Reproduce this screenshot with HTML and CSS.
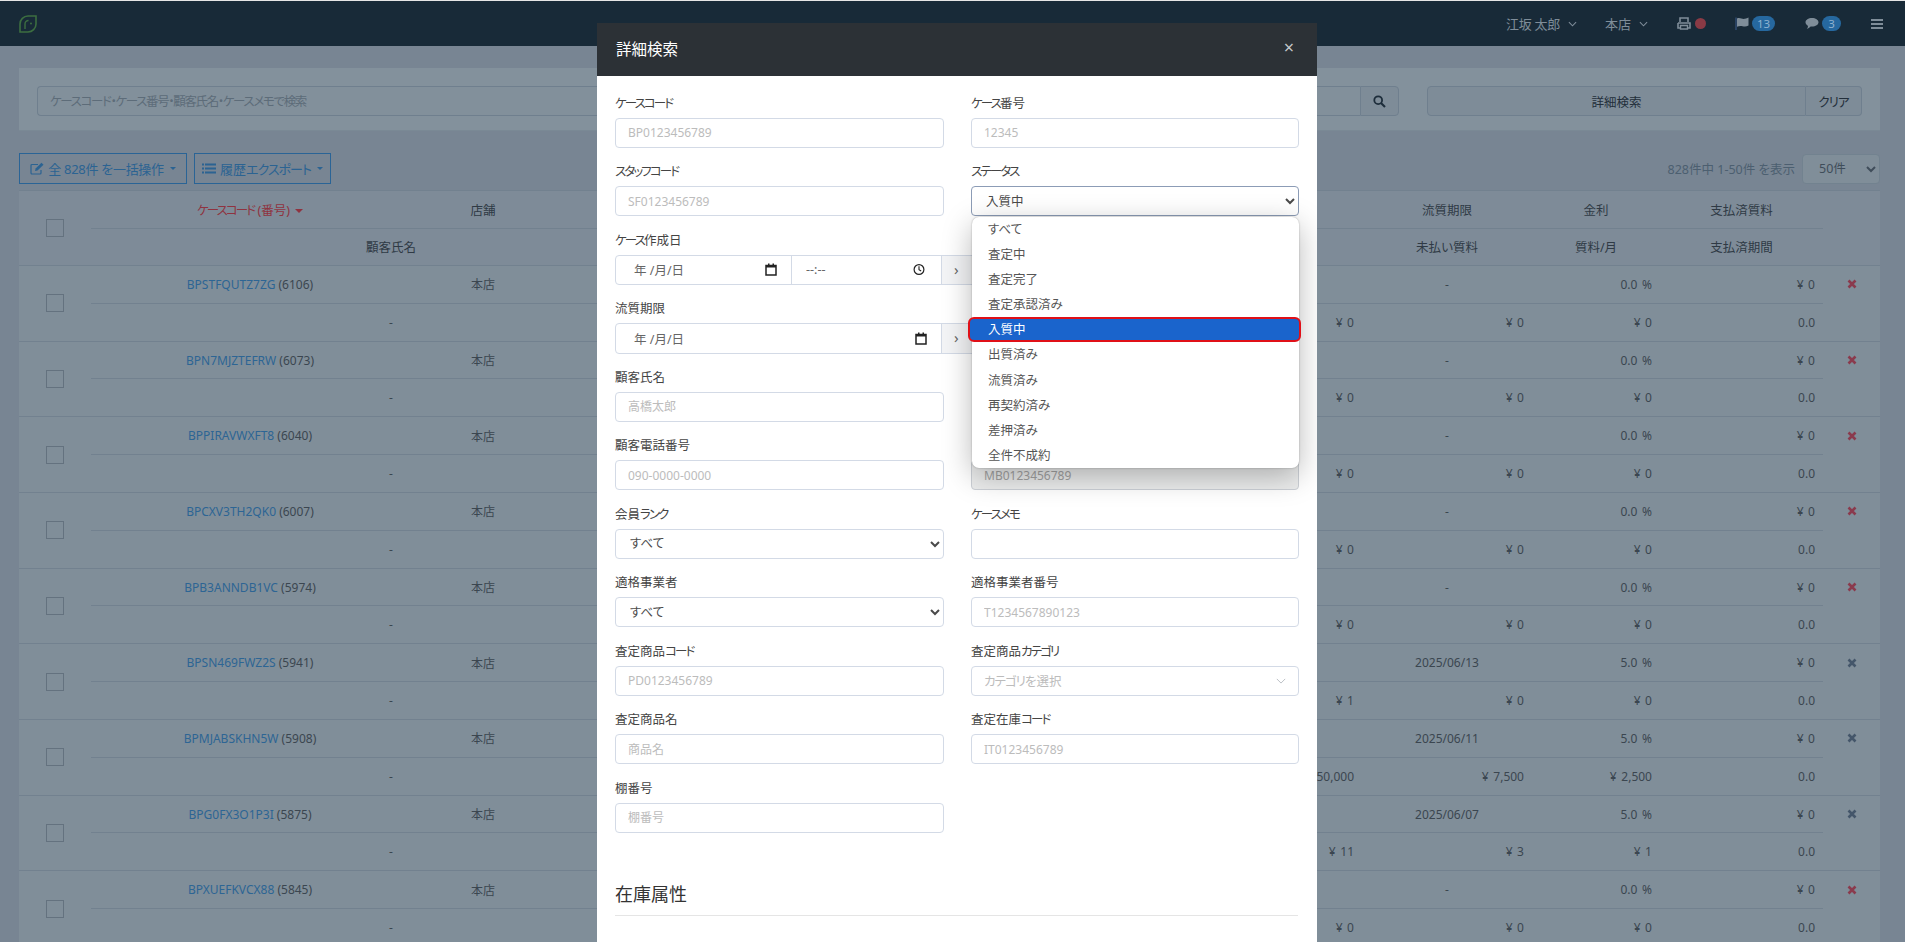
FILE: index.html
```html
<!DOCTYPE html>
<html lang="ja">
<head>
<meta charset="utf-8">
<title>ケース一覧</title>
<link rel="stylesheet" href="styles.css">
</head>
<body>
<header class="topbar">
  <svg class="logo" viewBox="0 0 18 18"><path d="M17 1H9a8 8 0 0 0-8 8v8h8a8 8 0 0 0 8-8z" fill="none" stroke="#3c6e40" stroke-width="1.6"/><path d="M6 14V9a3.500 3.500 0 0 1 3.500-3.500" fill="none" stroke="#3c6e40" stroke-width="1.4"/><circle cx="12" cy="8.500" r="1" fill="#3c6e40"/></svg>
  <nav class="nav">
    <span class="nav-item user">江坂 太郎<svg class="chev" viewBox="0 0 10 6"><path d="M1 1l4 4 4-4" fill="none" stroke="currentColor" stroke-width="1.2"/></svg></span>
    <span class="nav-item shop">本店<svg class="chev" viewBox="0 0 10 6"><path d="M1 1l4 4 4-4" fill="none" stroke="currentColor" stroke-width="1.2"/></svg></span>
    <span class="nav-item print"><svg class="ico" viewBox="0 0 14 13"><path d="M3 5V1h8v4M1 6h12v5h-2M3 11H1V6" fill="none" stroke="currentColor" stroke-width="1.6"/><path d="M3.500 8.500h7v3.500h-7z" fill="none" stroke="currentColor" stroke-width="1.4"/></svg><i class="dot"></i></span>
    <span class="nav-item flag"><svg class="ico" viewBox="0 0 14 13"><path d="M1 0.500V13" stroke="#33517a" stroke-width="1.3"/><path d="M2 1.500c3-1.300 5 1 8 .3 1.300-.3 2.500-.8 3.500-1.300v8c-3 2-6 .5-8 .5-1.300 0-2.500.3-3.500.8z" fill="currentColor"/></svg><b class="badge b13">13</b></span>
    <span class="nav-item msg"><svg class="ico" viewBox="0 0 14 13"><path d="M7 1c3.600 0 6.500 1.900 6.500 4.300S10.600 9.600 7 9.600c-.5 0-1 0-1.400-.1C4.600 10.600 3.200 11.600 1.800 12c.7-.9 1.200-2 1.200-3.100C1.500 8 .5 6.700.5 5.300.5 2.900 3.400 1 7 1z" fill="currentColor"/></svg><b class="badge b3">3</b></span>
    <svg class="burger" viewBox="0 0 12 10"><path d="M0 0h12v2H0zM0 4h12v2H0zM0 8h12v2H0z" fill="currentColor"/></svg>
  </nav>
</header>

<main class="page">
  <section class="search">
    <div class="search-box">
      <input class="search-input" placeholder="ケースコード・ケース番号・顧客氏名・ケースメモで検索">
      <button class="search-btn"><svg viewBox="0 0 13 13"><circle cx="5.200" cy="5.200" r="3.900" fill="none" stroke="currentColor" stroke-width="1.800"/><path d="M8 8l4 4" stroke="currentColor" stroke-width="2.200"/></svg></button>
    </div>
    <div class="adv">
      <button class="adv-main">詳細検索</button>
      <button class="adv-clear"><span class="k1">クリア</span></button>
    </div>
  </section>

  <section class="tools">
    <button class="tool one"><svg viewBox="0 0 14 13"><path d="M11 8v3a1 1 0 0 1-1 1H2a1 1 0 0 1-1-1V3.500a1 1 0 0 1 1-1h6" fill="none" stroke="currentColor" stroke-width="1.200"/><path d="M5 9l.6-2.500L11.500.8l2 1.900L7.500 8.500z" fill="currentColor"/></svg><span class="tight">全 828件 を一括操作</span><i class="caret"></i></button>
    <button class="tool two"><svg viewBox="0 0 14 12"><path d="M0 1h2v2H0zM3 1h11v2H3zM0 5h2v2H0zM3 5h11v2H3zM0 9h2v2H0zM3 9h11v2H3z" fill="currentColor"/></svg>履歴<span class="k1">エクスポート</span><i class="caret"></i></button>
    <span class="count">828件中 1-50件 を表示</span>
    <select class="per"><option>50件</option></select>
  </section>

  <section class="table">
    <div class="thead row">
      <div class="check"><i class="box"></i></div>
      <div class="mid">
        <div class="l1 hd">
          <span class="sorted"><span class="k">ケースコード</span> (番号)<i class="caret"></i></span><span>店舗</span><span></span><span>流質期限</span><span>金利</span><span>支払済質料</span>
        </div>
        <div class="l2 hd">
          <span>顧客氏名</span><span></span><span></span><span>未払い質料</span><span>質料/月</span><span>支払済期間</span>
        </div>
      </div>
      <div class="act"></div>
    </div>

    <div class="row">
      <div class="check"><i class="box"></i></div>
      <div class="mid">
        <div class="l1"><span class="c"><a>BPSTFQUTZ7ZG</a> (6106)</span><span class="c">本店</span><span></span><span class="c">-</span><span class="r">0.0 %</span><span class="r">¥ 0</span></div>
        <div class="l2"><span class="c">-</span><span></span><span class="r">¥ 0</span><span class="r">¥ 0</span><span class="r">¥ 0</span><span class="r">0.0</span></div>
      </div>
      <div class="act red"><svg viewBox="0 0 10 10"><path d="M1.500 1.500l7 7M8.500 1.500l-7 7" stroke="currentColor" stroke-width="2.600"/></svg></div>
    </div>
    <div class="row">
      <div class="check"><i class="box"></i></div>
      <div class="mid">
        <div class="l1"><span class="c"><a>BPN7MJZTEFRW</a> (6073)</span><span class="c">本店</span><span></span><span class="c">-</span><span class="r">0.0 %</span><span class="r">¥ 0</span></div>
        <div class="l2"><span class="c">-</span><span></span><span class="r">¥ 0</span><span class="r">¥ 0</span><span class="r">¥ 0</span><span class="r">0.0</span></div>
      </div>
      <div class="act red"><svg viewBox="0 0 10 10"><path d="M1.500 1.500l7 7M8.500 1.500l-7 7" stroke="currentColor" stroke-width="2.600"/></svg></div>
    </div>
    <div class="row">
      <div class="check"><i class="box"></i></div>
      <div class="mid">
        <div class="l1"><span class="c"><a>BPPIRAVWXFT8</a> (6040)</span><span class="c">本店</span><span></span><span class="c">-</span><span class="r">0.0 %</span><span class="r">¥ 0</span></div>
        <div class="l2"><span class="c">-</span><span></span><span class="r">¥ 0</span><span class="r">¥ 0</span><span class="r">¥ 0</span><span class="r">0.0</span></div>
      </div>
      <div class="act red"><svg viewBox="0 0 10 10"><path d="M1.500 1.500l7 7M8.500 1.500l-7 7" stroke="currentColor" stroke-width="2.600"/></svg></div>
    </div>
    <div class="row">
      <div class="check"><i class="box"></i></div>
      <div class="mid">
        <div class="l1"><span class="c"><a>BPCXV3TH2QK0</a> (6007)</span><span class="c">本店</span><span></span><span class="c">-</span><span class="r">0.0 %</span><span class="r">¥ 0</span></div>
        <div class="l2"><span class="c">-</span><span></span><span class="r">¥ 0</span><span class="r">¥ 0</span><span class="r">¥ 0</span><span class="r">0.0</span></div>
      </div>
      <div class="act red"><svg viewBox="0 0 10 10"><path d="M1.500 1.500l7 7M8.500 1.500l-7 7" stroke="currentColor" stroke-width="2.600"/></svg></div>
    </div>
    <div class="row">
      <div class="check"><i class="box"></i></div>
      <div class="mid">
        <div class="l1"><span class="c"><a>BPB3ANNDB1VC</a> (5974)</span><span class="c">本店</span><span></span><span class="c">-</span><span class="r">0.0 %</span><span class="r">¥ 0</span></div>
        <div class="l2"><span class="c">-</span><span></span><span class="r">¥ 0</span><span class="r">¥ 0</span><span class="r">¥ 0</span><span class="r">0.0</span></div>
      </div>
      <div class="act red"><svg viewBox="0 0 10 10"><path d="M1.500 1.500l7 7M8.500 1.500l-7 7" stroke="currentColor" stroke-width="2.600"/></svg></div>
    </div>
    <div class="row">
      <div class="check"><i class="box"></i></div>
      <div class="mid">
        <div class="l1"><span class="c"><a>BPSN469FWZ2S</a> (5941)</span><span class="c">本店</span><span></span><span class="c">2025/06/13</span><span class="r">5.0 %</span><span class="r">¥ 0</span></div>
        <div class="l2"><span class="c">-</span><span></span><span class="r">¥ 1</span><span class="r">¥ 0</span><span class="r">¥ 0</span><span class="r">0.0</span></div>
      </div>
      <div class="act slate"><svg viewBox="0 0 10 10"><path d="M1.500 1.500l7 7M8.500 1.500l-7 7" stroke="currentColor" stroke-width="2.600"/></svg></div>
    </div>
    <div class="row">
      <div class="check"><i class="box"></i></div>
      <div class="mid">
        <div class="l1"><span class="c"><a>BPMJABSKHN5W</a> (5908)</span><span class="c">本店</span><span></span><span class="c">2025/06/11</span><span class="r">5.0 %</span><span class="r">¥ 0</span></div>
        <div class="l2"><span class="c">-</span><span></span><span class="r">¥ 50,000</span><span class="r">¥ 7,500</span><span class="r">¥ 2,500</span><span class="r">0.0</span></div>
      </div>
      <div class="act slate"><svg viewBox="0 0 10 10"><path d="M1.500 1.500l7 7M8.500 1.500l-7 7" stroke="currentColor" stroke-width="2.600"/></svg></div>
    </div>
    <div class="row">
      <div class="check"><i class="box"></i></div>
      <div class="mid">
        <div class="l1"><span class="c"><a>BPG0FX3O1P3I</a> (5875)</span><span class="c">本店</span><span></span><span class="c">2025/06/07</span><span class="r">5.0 %</span><span class="r">¥ 0</span></div>
        <div class="l2"><span class="c">-</span><span></span><span class="r">¥ 11</span><span class="r">¥ 3</span><span class="r">¥ 1</span><span class="r">0.0</span></div>
      </div>
      <div class="act slate"><svg viewBox="0 0 10 10"><path d="M1.500 1.500l7 7M8.500 1.500l-7 7" stroke="currentColor" stroke-width="2.600"/></svg></div>
    </div>
    <div class="row">
      <div class="check"><i class="box"></i></div>
      <div class="mid">
        <div class="l1"><span class="c"><a>BPXUEFKVCX88</a> (5845)</span><span class="c">本店</span><span></span><span class="c">-</span><span class="r">0.0 %</span><span class="r">¥ 0</span></div>
        <div class="l2"><span class="c">-</span><span></span><span class="r">¥ 0</span><span class="r">¥ 0</span><span class="r">¥ 0</span><span class="r">0.0</span></div>
      </div>
      <div class="act red"><svg viewBox="0 0 10 10"><path d="M1.500 1.500l7 7M8.500 1.500l-7 7" stroke="currentColor" stroke-width="2.600"/></svg></div>
    </div>
  </section>
</main>

<div class="modal">
  <div class="modal-head"><h2>詳細検索</h2><span class="close">×</span></div>
  <div class="modal-body">
    <form class="form">
      <div class="field"><label><span class="k">ケースコード</span></label><input placeholder="BP0123456789"></div>
      <div class="field"><label><span class="k">ケース</span>番号</label><input placeholder="12345"></div>
      <div class="field"><label><span class="k">スタッフコード</span></label><input placeholder="SF0123456789"></div>
      <div class="field status">
        <label><span class="k">ステータス</span></label>
        <select class="focus"><option>入質中</option></select>
        <ul class="options">
          <li>すべて</li><li>査定中</li><li>査定完了</li><li>査定承認済み</li>
          <li class="sel">入質中</li>
          <li>出質済み</li><li>流質済み</li><li>再契約済み</li><li>差押済み</li><li>全件不成約</li>
        </ul>
      </div>
      <div class="field wide">
        <label><span class="k">ケース</span>作成日</label>
        <div class="range">
          <span class="date d1">年 /月/日<svg viewBox="0 0 12 13"><path d="M1 2.500h10V12H1z" fill="none" stroke="#222" stroke-width="1.500"/><path d="M1 2h10v2.500H1zM3 .5h1.500V2H3zM7.500.5H9V2H7.500z" fill="#222"/></svg></span>
          <span class="date d2">--:--<svg viewBox="0 0 13 13"><circle cx="6.500" cy="6.500" r="5.300" fill="none" stroke="#222" stroke-width="1.300"/><path d="M6.500 3v3.700l2.300 1.500" fill="none" stroke="#222" stroke-width="1.200"/></svg></span>
          <span class="addon">›</span>
        </div>
      </div>
      <div class="field wide">
        <label>流質期限</label>
        <div class="range">
          <span class="date d3">年 /月/日<svg viewBox="0 0 12 13"><path d="M1 2.500h10V12H1z" fill="none" stroke="#222" stroke-width="1.500"/><path d="M1 2h10v2.500H1zM3 .5h1.500V2H3zM7.500.5H9V2H7.500z" fill="#222"/></svg></span>
          <span class="addon">›</span>
        </div>
      </div>
      <div class="field"><label>顧客氏名</label><input placeholder="高橋太郎"></div>
      <div class="field"></div>
      <div class="field"><label>顧客電話番号</label><input placeholder="090-0000-0000"></div>
      <div class="field"><label></label><input class="shaded" placeholder="MB0123456789"></div>
      <div class="field"><label>会員<span class="k">ランク</span></label><select><option>すべて</option></select></div>
      <div class="field"><label><span class="k">ケースメモ</span></label><input></div>
      <div class="field"><label>適格事業者</label><select><option>すべて</option></select></div>
      <div class="field"><label>適格事業者番号</label><input placeholder="T1234567890123"></div>
      <div class="field"><label>査定商品<span class="k">コード</span></label><input placeholder="PD0123456789"></div>
      <div class="field"><label>査定商品<span class="k">カテゴリ</span></label>
        <div class="picker"><span class="k1">カテゴリ</span>を選択<svg viewBox="0 0 12 7"><path d="M1 1l5 5 5-5" fill="none" stroke="#aeb4bb" stroke-width="1"/></svg></div>
      </div>
      <div class="field"><label>査定商品名</label><input placeholder="商品名"></div>
      <div class="field"><label>査定在庫<span class="k">コード</span></label><input placeholder="IT0123456789"></div>
      <div class="field"><label>棚番号</label><input placeholder="棚番号"></div>
    </form>
    <h3 class="section">在庫属性</h3>
  </div>
</div>
</body>
</html>
```
FILE: styles.css
```css
* { box-sizing: border-box; }
html, body { height: 100%; }
body {
  margin: 0;
  height: 942px;
  overflow: hidden;
  background: #788593;
  border-top: 1px solid #e6e6e6;
  font-family: "Noto Sans", "Noto Sans CJK JP", sans-serif;
  font-size: 12.5px;
  font-feature-settings: "palt";
  color: #3b4650;
}
input, select, button { font: inherit; font-feature-settings: inherit; }
i, b { font-style: normal; font-weight: normal; }
.k { letter-spacing: -1.900px; }
.k1 { letter-spacing: -1px; }
.tight { letter-spacing: -.3px; }

/* top bar */
.topbar {
  height: 45px;
  background: #182a38;
  display: flex;
  align-items: center;
  justify-content: space-between;
  padding: 0 22px 0 19px;
  color: #7f8d99;
}
.logo { width: 18px; height: 18px; }
.nav { display: flex; align-items: center; height: 100%; }
.nav-item { display: inline-flex; align-items: center; font-size: 13px; }
.user { gap: 8px; margin-right: 28px; letter-spacing: -.3px; }
.shop { gap: 8px; margin-right: 29px; }
.print { margin-right: 29px; }
.flag { margin-right: 30px; }
.msg { margin-right: 30px; }
.chev { width: 9px; height: 6px; margin-top: 1px; }
.ico { width: 14px; height: 13px; }
.dot { width: 11px; height: 11px; border-radius: 50%; background: #8a3a45; margin-left: 4px; }
.badge {
  height: 15px;
  border-radius: 8px;
  background: #26689f;
  color: #8fb2cf;
  font-size: 11.5px;
  line-height: 15px;
  text-align: center;
  margin-left: 3px;
}
.b13 { width: 23px; }
.b3 { width: 19px; }
.burger { width: 12px; height: 10px; }

/* page */
.page { padding: 22px 25px 0 19px; }
.search {
  height: 63px;
  background: #83919c;
  border-bottom: 1px solid #7a8995;
  padding: 18px 18px 0;
  display: flex;
  gap: 28px;
}
.search-box { display: flex; width: 1362px; height: 30px; }
.search-input {
  flex: 1;
  min-width: 0;
  background: #82909b;
  border: 1px solid #6f7f8e;
  border-right: 0;
  border-radius: 4px 0 0 4px;
  padding: 0 12px;
  outline: 0;
}
.search-input::placeholder { color: #5d6c79; opacity: 1; letter-spacing: -1.350px; }
.search-btn {
  width: 39px;
  padding: 0;
  background: #7e8c98;
  border: 1px solid #6f7f8e;
  border-radius: 0 4px 4px 0;
  color: #1d2d3b;
  display: flex;
  align-items: center;
  justify-content: center;
}
.search-btn svg { width: 13px; height: 13px; }
.adv { display: flex; flex: 1; height: 30px; }
.adv button { border: 1px solid #6f7f8e; background: #7e8c98; color: #232f3b; padding: 0; }
.adv-main { flex: 1; border-radius: 4px 0 0 4px; }
.adv-clear { width: 56px; border-left: 0 !important; border-radius: 0 4px 4px 0; }

.tools { display: flex; align-items: center; height: 31px; margin-top: 22px; gap: 7px; }
.tool {
  height: 31px;
  background: transparent;
  border: 1px solid #2a6496;
  color: #2b6392;
  padding: 0;
  display: inline-flex;
  align-items: center;
  justify-content: center;
  font-size: 13px;
}
.tool svg { width: 14px; height: 13px; margin-right: 4px; }
.one { width: 168px; }
.two { width: 137px; }
.caret {
  display: inline-block;
  border: 3.5px solid transparent;
  border-top-color: currentColor;
  border-bottom: 0;
  margin-left: 6px;
  vertical-align: middle;
}
.count { margin-left: auto; color: #4c5f70; }
.per {
  width: 78px;
  height: 30px;
  background: #808e99;
  border: 1px solid #72828f;
  border-radius: 4px;
  color: #3f4d5a;
  padding-left: 12px;
}

/* table */
.table { margin-top: 6px; background: #808e99; font-size: 12px; }
.row {
  display: grid;
  grid-template-columns: 72px 1fr 57px;
  height: 75.67px;
  border-bottom: 1px solid #72818f;
}
.thead { background: #7e8b98; border-top: 1px solid #72818f; height: 76px; font-size: 12.5px; color: #2f3a45; }
.check { display: flex; align-items: center; justify-content: center; }
.box { width: 18px; height: 18px; border: 1px solid #64727f; }
.mid { display: flex; flex-direction: column; }
.l1, .l2 { flex: 1; display: grid; align-items: center; }
.l1 { grid-template-columns: 318px 148px 1fr 170px 128px 163px; border-bottom: 1px solid #72818f; }
.l2 { grid-template-columns: 600px 1fr 170px 170px 128px 163px; }
.hd { text-align: center; }
.c { text-align: center; }
.r { text-align: right; padding-right: 8px; word-spacing: 1.500px; }
a { color: #2d6594; }
.sorted { color: #8f3340; }
.sorted .caret { border-width: 4px 4px 0; margin-left: 5px; }
.act { display: flex; align-items: center; justify-content: center; padding-bottom: 38px; }
.act svg { width: 10px; height: 10px; }
.red { color: #8a3a4d; }
.slate { color: #44566a; }

/* modal */
.modal {
  position: absolute;
  left: 597px;
  top: 23px;
  width: 720px;
  height: 919px;
  background: #fff;
  overflow: hidden;
  color: #444;
}
.modal-head {
  height: 53px;
  background: #2c3136;
  display: flex;
  align-items: center;
  justify-content: space-between;
  padding: 0 23px 0 19px;
  color: #fff;
}
.modal-head h2 { margin: -2px 0 0; font-size: 15.5px; font-weight: 400; }
.close { font-size: 18px; color: #c5c8cb; margin-top: -6px; }
.modal-body { padding: 3.600px 19px 0 18px; }
.form { display: grid; grid-template-columns: 329px 328px; column-gap: 27px; grid-auto-rows: 68.5px; }
.field { display: flex; flex-direction: column; position: relative; min-width: 0; }
.field label { height: 38px; padding-top: 14px; line-height: 20px; flex: none; }
.field input, .field select, .picker {
  height: 30px;
  width: 100%;
  border: 1px solid #d3dae6;
  border-radius: 4px;
  background: #fff;
  padding: 0 12px;
  color: #4a4a4a;
  font-size: 12px;
  outline: 0;
}
.field select { padding-left: 10px; font-size: 12.5px; }
.field input::placeholder { color: #bcbcbc; opacity: 1; }
.field select.focus { border-color: #8c9cb6; }
.field input.shaded { background: #eceded; border-color: #ccd0d6; }
.field input.shaded::placeholder { color: #a2a2a2; }
.picker {
  display: flex;
  align-items: center;
  color: #bcbcbc;
  font-size: 12.5px;
}
.picker svg { width: 10px; height: 6px; margin-left: auto; }

.wide { grid-column: 1 / -1; }
.range { display: flex; height: 31px; border: 1px solid #d3dae6; border-radius: 4px; }
.date { display: flex; align-items: center; justify-content: space-between; padding: 0 14px 0 18px; font-size: 12.5px; color: #666; }
.date svg { width: 12px; height: 13px; }
.d1 { width: 176px; border-right: 1px solid #d3dae6; }
.d2 { width: 149px; padding: 0 16px 0 14px; }
.d3 { width: 325px; }
.addon { flex: 1; background: #f3f4f6; border-left: 1px solid #d3dae6; padding-left: 12px; line-height: 27px; font-size: 15px; color: #666; }

.options {
  position: absolute;
  z-index: 2;
  top: 69px;
  left: 1px;
  right: 0;
  margin: 0;
  padding: 0;
  list-style: none;
  background: #fff;
  border-radius: 7px;
  box-shadow: 0 8px 30px rgba(0, 0, 0, .28), 0 0 2px rgba(0, 0, 0, .3);
}
.options li { height: 25.100px; line-height: 25px; padding-left: 16px; color: #555; font-size: 12.5px; }
.options .sel {
  margin: 0 -2px 0 -4px;
  padding-left: 18px;
  height: 25px;
  line-height: 22px;
  background: #1a64cc;
  color: #fff;
  border: 2px solid #e01018;
  border-radius: 6px;
}

.section {
  margin: 48px 0 0;
  height: 35px;
  border-bottom: 1px solid #e5e5e5;
  font-size: 18px;
  font-weight: 400;
  line-height: 26px;
  color: #333;
}
```
